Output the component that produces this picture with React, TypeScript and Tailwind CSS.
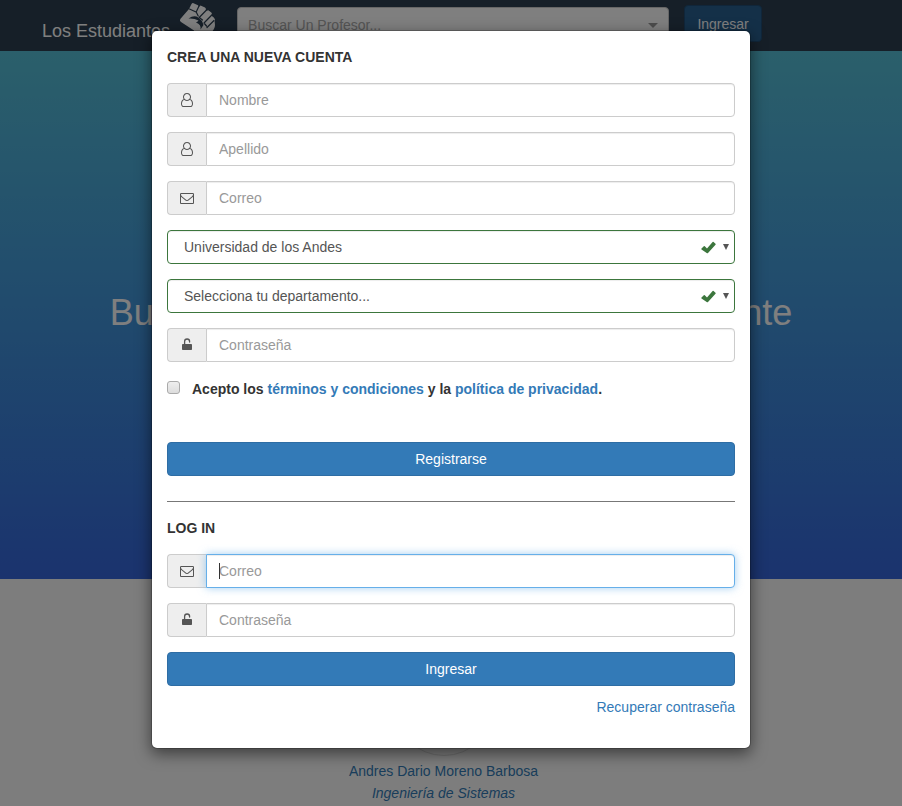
import type { ReactNode } from "react";

function Icon({ d, width = 1792 }: { d: string; width?: number }) {
  return (
    <svg viewBox={`0 0 ${width} 1792`} className="h-3.5 w-auto fill-current" aria-hidden="true">
      <path d={d} />
    </svg>
  );
}

const USER =
  "M1201 784q47 14 89.5 38t89 73 79.5 115.5 55 172 22 236.5q0 154-100 263.5t-241 109.5h-854q-141 0-241-109.5t-100-263.5q0-131 22-236.5t55-172 79.5-115.5 89-73 89.5-38q-79-125-79-272 0-104 40.5-198.5t109.5-163.5 163.5-109.5 198.5-40.5 198.5 40.5 163.5 109.5 109.5 163.5 40.5 198.5q0 147-79 272zm-433-656q-159 0-271.5 112.5t-112.5 271.5 112.5 271.5 271.5 112.5 271.5-112.5 112.5-271.5-112.5-271.5-271.5-112.5zm427 1536q88 0 150.5-71.5t62.5-173.5q0-239-78.5-377t-225.5-145q-145 127-336 127t-336-127q-147 7-225.5 145t-78.5 377q0 102 62.5 173.5t150.5 71.5h854z";
const MAIL =
  "M1664 1504v-768q-32 36-69 66-268 206-426 338-51 43-83 67t-86.5 48.5-102.5 24.5h-2q-48 0-102.5-24.5t-86.5-48.5-83-67q-158-132-426-338-37-30-69-66v768q0 13 9.5 22.5t22.5 9.5h1472q13 0 22.5-9.5t9.5-22.5zm0-1051v-24.5l-.5-13-3-12.5-5.5-9-9-7.5-14-2.5h-1472q-13 0-22.5 9.5t-9.5 22.5q0 168 147 284 193 152 401 317 6 5 35 29.5t46 37.5 44.5 31.5 50.5 27.5 43 9h2q20 0 43-9t50.5-27.5 44.5-31.5 46-37.5 35-29.5q208-165 401-317 54-43 100.5-115.5t46.5-131.5zm128-37v1088q0 66-47 113t-113 47h-1472q-66 0-113-47t-47-113v-1088q0-66 47-113t113-47h1472q66 0 113 47t47 113z";

function Padlock() {
  return (
    <svg viewBox="0 0 14 14" className="size-3.5" aria-hidden="true">
      <rect x="2" y="6" width="10" height="6" rx="0.8" fill="currentColor" />
      <path
        d="M4.600 6.500V3.500a2.500 2.500 0 0 1 5 0v.6"
        fill="none"
        stroke="currentColor"
        strokeWidth="1.300"
        strokeLinecap="round"
      />
    </svg>
  );
}

function Field({
  id,
  label,
  icon,
  type = "text",
  active = false,
}: {
  id: string;
  label: string;
  icon: ReactNode;
  type?: string;
  active?: boolean;
}) {
  return (
    <div className="relative flex h-[34px]">
      <label
        htmlFor={id}
        aria-label={label}
        className="flex w-[39px] shrink-0 items-center justify-center rounded-l border border-r-0 border-[#ccc] bg-[#eee] text-[#555]"
      >
        {icon}
      </label>
      <input
        id={id}
        type={type}
        placeholder={label}
        className={`min-w-0 flex-1 rounded-r border bg-white px-3 text-sm text-[#555] outline-none placeholder:text-[#999] ${
          active
            ? "border-[#66afe9] shadow-[inset_0_1px_1px_rgba(0,0,0,0.075),0_0_8px_rgba(102,175,233,0.6)]"
            : "border-[#ccc] shadow-[inset_0_1px_1px_rgba(0,0,0,0.075)]"
        }`}
      />
      {active && <span className="absolute top-[9px] left-13 h-4 w-px bg-[#333]" />}
    </div>
  );
}

function Choice({ label, value }: { label: string; value: string }) {
  return (
    <div className="relative h-[34px]">
      <select
        aria-label={label}
        className="h-full w-full appearance-none rounded border border-[#3c763d] bg-white px-4 text-sm text-[#555] shadow-[inset_0_1px_1px_rgba(0,0,0,0.075)] outline-none"
      >
        <option>{value}</option>
      </select>
      <svg viewBox="0 0 16 14" className="pointer-events-none absolute top-[11px] right-[19px] h-3.5 w-4" aria-hidden="true">
        <path d="M1.500 7.500l2.300-2.200q.5-.4 1 0l2.200 2.100 5.600-6.400q.5-.5 1 0l1.900 1.700q.5.500 0 1l-7.500 8.200q-.7.600-1.300 0l-5.200-3.500q-.5-.4 0-.9z" fill="#3c763d" />
      </svg>
      <svg viewBox="0 0 6 6" className="pointer-events-none absolute top-[14px] right-[6px] size-1.5" aria-hidden="true">
        <path d="M0 0h6l-3 6z" fill="#555" />
      </svg>
    </div>
  );
}

function Fist() {
  return (
    <svg viewBox="0 0 38 40" className="h-10 w-[38px]" aria-hidden="true">
      <path
        d="M2.300 19L11 9l2.500-5q.8-1.200 2-.8l4.500 2 1 1.500 1.500-1.300 4.500 2q1.200.8.800 2l.8 1.400 1.700-.6 3 2.300q1 1 .4 2.200l.4 1.600 1.200.7 1.500 2q.6 1.200-.2 2.300l.4 3.700q0 4-4.500 8.500v6H16v-9L3 22q-1.800-1.200-.7-3z"
        fill="#fff"
      />
      <g fill="none" stroke="#2c3e50" strokeWidth="1.200" strokeLinejoin="round" strokeLinecap="round">
        <path d="M11.500 9l6.500 3M21 6l-2.800 6 2 4M28.500 10l-7.300 7.500 3.300 2.500M33.800 15l-7.800 8 2.500 3M36 20.500l-7 7" />
      </g>
      <path d="M10.500 18.500q6-4 10-.7l3.500 3.200 1.500 4-3 4.500q1-5-4.500-7 2-1 2.500-2-4.500-2.500-10-2z" fill="#2c3e50" />
    </svg>
  );
}

const primary =
  "h-[34px] w-full rounded border border-[#2e6da4] bg-[#337ab7] text-sm text-white";

export default function App() {
  return (
    <div className="relative h-screen overflow-hidden bg-[#fafafa] font-['Liberation_Sans',Arial,sans-serif] text-sm text-[#333]">
      <header className="flex h-[51px] bg-[#2c3e50] pl-[42px]">
        <a href="#inicio" className="pt-[21px] text-lg leading-5 whitespace-nowrap text-white">
          Los Estudiantes
        </a>
        <div className="ml-2 h-10 shrink-0">
          <Fist />
        </div>
        <div className="mt-[7px] ml-[21px] flex h-9 w-[432px] items-center rounded border border-[#ccc] bg-white px-2.5">
          <input
            aria-label="Buscar un profesor"
            placeholder="Buscar Un Profesor..."
            className="min-w-0 flex-1 bg-transparent text-sm outline-none placeholder:text-[#aaa]"
          />
          <svg viewBox="0 0 10 5" className="h-[5px] w-2.5 fill-[#999]" aria-hidden="true">
            <path d="M0 0h10l-5 5z" />
          </svg>
        </div>
        <button className="mt-[5px] ml-[15px] h-[37px] w-[78px] rounded border border-[#204d74] bg-[#286090] text-sm text-white">
          Ingresar
        </button>
      </header>

      <section className="flex h-[528px] items-center justify-center bg-linear-to-b from-[#56bfd6] to-[#3666dc] pb-1">
        <h1 className="text-4xl whitespace-nowrap text-white">Busca y evalúa profesores, anónimamente</h1>
      </section>

      <section className="flex flex-col items-center pt-[77px] pr-[15px]">
        <div className="size-[100px] rounded-full border border-[#ddd]" />
        <a href="#profesor" className="mt-1 block text-center leading-[22px] text-[#337ab7]">
          Andres Dario Moreno Barbosa
          <br />
          <em>Ingeniería de Sistemas</em>
        </a>
      </section>

      <div className="absolute inset-0 bg-black/50">
        <div
          role="dialog"
          aria-label="Crea una nueva cuenta"
          className="mx-auto mt-[30px] w-full max-w-[600px] rounded-md border border-black/20 bg-white bg-clip-padding px-[15px] pt-4 pb-[31px] shadow-[0_5px_15px_rgba(0,0,0,0.5)]"
        >
          <form>
            <h2 className="mb-4 text-sm leading-5 font-bold">CREA UNA NUEVA CUENTA</h2>
            <div className="flex flex-col gap-[15px]">
              <Field id="nombre" label="Nombre" icon={<Icon d={USER} width={1536} />} />
              <Field id="apellido" label="Apellido" icon={<Icon d={USER} width={1536} />} />
              <Field id="correo" label="Correo" type="email" icon={<Icon d={MAIL} />} />
              <Choice label="Universidad" value="Universidad de los Andes" />
              <Choice label="Departamento" value="Selecciona tu departamento..." />
              <Field id="clave" label="Contraseña" type="password" icon={<Padlock />} />
            </div>
            <div className="mt-[17px] flex gap-3">
              <input
                id="acepto"
                type="checkbox"
                className="mt-0.5 size-[13px] shrink-0 appearance-none rounded-[3px] border border-[#aaa] bg-linear-to-b from-[#eee] to-[#ddd]"
              />
              <label htmlFor="acepto" className="leading-5 font-bold">
                Acepto los{" "}
                <a href="#terminos" className="text-[#337ab7]">
                  términos y condiciones
                </a>{" "}
                y la{" "}
                <a href="#privacidad" className="text-[#337ab7]">
                  política de privacidad
                </a>
                .
              </label>
            </div>
            <button type="button" className={`mt-[43px] ${primary}`}>
              Registrarse
            </button>
          </form>
          <hr className="mt-[25px] mb-4 border-t border-[#777]" />
          <form>
            <h2 className="mb-4 text-sm leading-5 font-bold">LOG IN</h2>
            <div className="flex flex-col gap-[15px]">
              <Field id="login-correo" label="Correo" type="email" icon={<Icon d={MAIL} />} active />
              <Field id="login-clave" label="Contraseña" type="password" icon={<Padlock />} />
              <button type="button" className={primary}>
                Ingresar
              </button>
            </div>
            <a href="#recuperar" className="mt-[11px] block text-right leading-5 text-[#337ab7]">
              Recuperar contraseña
            </a>
          </form>
        </div>
      </div>
    </div>
  );
}
